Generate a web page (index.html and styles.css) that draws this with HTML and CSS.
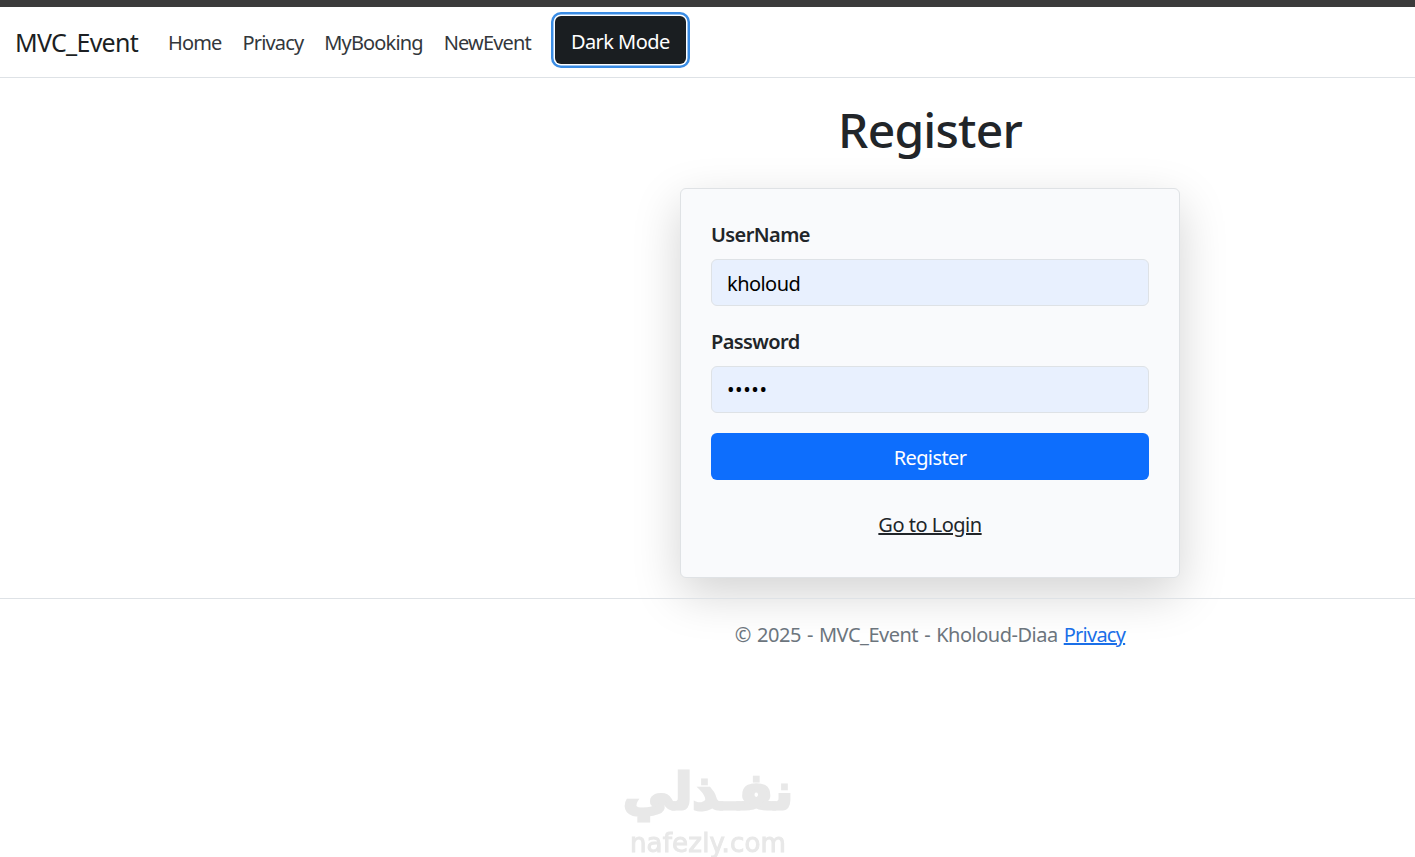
FILE: index.html
```html
<!doctype html>
<html>
<head>
  <title>Register - MVC_Event</title>
  <meta charset='UTF-8'>
  <link rel="stylesheet" href="styles.css">
</head>
<body>
  <nav class='navbar'>
    <a class='brand' href='#'>MVC_Event</a>
    <a class='nav-link' href='#'>Home</a>
    <a class='nav-link' href='#'>Privacy</a>
    <a class='nav-link' href='#'>MyBooking</a>
    <a class='nav-link' href='#'>NewEvent</a>
    <button class='btn-dark'>Dark Mode</button>
  </nav>
  <main class='main'>
    <h1>Register</h1>
    <form class='card'>
      <label for='user'>UserName</label>
      <input id='user' type='text' value='kholoud'>
      <label for='pass'>Password</label>
      <input id='pass' type='password' value='12345'>
      <button class='btn-primary' type='button'>Register</button>
      <a class='login' href='#'>Go to Login</a>
    </form>
  </main>
  <footer class='footer'>
    <span>© 2025 - MVC_Event - Kholoud-Diaa <a href='#'>Privacy</a></span>
  </footer>
  <div class='watermark'>
    <div class='wm-ar' lang='ar' dir='rtl'>نفـذلي</div>
    <div class='wm-en'>nafezly.com</div>
  </div>
</body>
</html>
```

FILE: styles.css
```css
* { box-sizing: border-box }
html, body { height: 100% }
body {
  margin: 0;
  background: #fff;
  color: #212529;
  font-family: "Noto Sans", "Open Sans", sans-serif;
  font-size: 20px;
  letter-spacing: -.5px;
  border-top: 7px solid #3b3b3b;
  overflow: hidden;
  position: relative
}
a { color: inherit }
.navbar {
  display: flex;
  align-items: center;
  height: 71px;
  padding: 0 16px 0 15px;
  border-bottom: 1px solid #dee2e6
}
.brand {
  font-size: 25px;
  letter-spacing: -.72px;
  text-decoration: none;
  margin-right: 30px;
  color: #1c1f23
}
.nav-link {
  letter-spacing: -.85px;
  text-decoration: none;
  margin-right: 21px;
  color: #33373b
}
.btn-dark {
  font: inherit;
  letter-spacing: -.55px;
  color: #fff;
  background: #1a1e21;
  border: 0;
  border-radius: 6px;
  padding-top: 3px;
  width: 131px;
  height: 48px;
  margin: -4px 0 0 3px;
  box-shadow: 0 0 0 1.5px #fff, 0 0 0 4px #3a8ce4
}
.main {
  margin-left: 445px;
  display: flex;
  flex-direction: column;
  align-items: center;
  height: 520px
}
h1 {
  font-size: 48px;
  font-weight: 500;
  letter-spacing: -.8px;
  line-height: 58px;
  margin: 23px 0 29px
}
.card {
  width: 500px;
  height: 390px;
  padding: 30px;
  display: flex;
  flex-direction: column;
  background: #f9fafc;
  border: 1px solid #dfe2e5;
  border-radius: 6px;
  box-shadow: 0 16px 48px rgba(0, 0, 0, .175)
}
label {
  font-weight: 600;
  letter-spacing: -.6px;
  padding-top: 1px;
  line-height: 30px;
  height: 30px;
  margin: 0 0 10px
}
input {
  font: inherit;
  letter-spacing: -.55px;
  color: #000;
  height: 47px;
  padding: 2px 15px 0;
  margin-bottom: 20px;
  background: #e8f0fe;
  border: 1px solid #dee2e6;
  border-radius: 6px;
  outline: 0
}
#pass {
  padding-top: 0;
  letter-spacing: .6px
}
.btn-primary {
  font: inherit;
  letter-spacing: -.6px;
  color: #fff;
  height: 47px;
  padding-top: 2px;
  background: #0d6efd;
  border: 0;
  border-radius: 6px
}
.login {
  align-self: center;
  margin-top: 30px;
  line-height: 30px
}
.footer {
  position: relative;
  height: 80px;
  padding-left: 445px;
  text-align: center;
  line-height: 72px;
  word-spacing: 1.4px;
  color: #6c757d;
  border-top: 1px solid #dee2e6
}
.footer a {
  letter-spacing: -.75px;
  color: #1a6fe8
}
.watermark {
  position: absolute;
  left: 600px;
  top: 752px;
  width: 216px;
  text-align: center;
  color: #e8e8e8;
  letter-spacing: 0;
  filter: blur(.5px)
}
.wm-ar {
  font-family: "DejaVu Sans", sans-serif;
  font-weight: 700;
  font-size: 50px;
  line-height: 66px;
  -webkit-text-stroke: 3px #e8e8e8
}
.wm-en {
  font-family: "DejaVu Sans", sans-serif;
  font-size: 26px;
  letter-spacing: .2px;
  line-height: 28px;
  margin-top: 4px;
  -webkit-text-stroke: 1px #e8e8e8
}
```
